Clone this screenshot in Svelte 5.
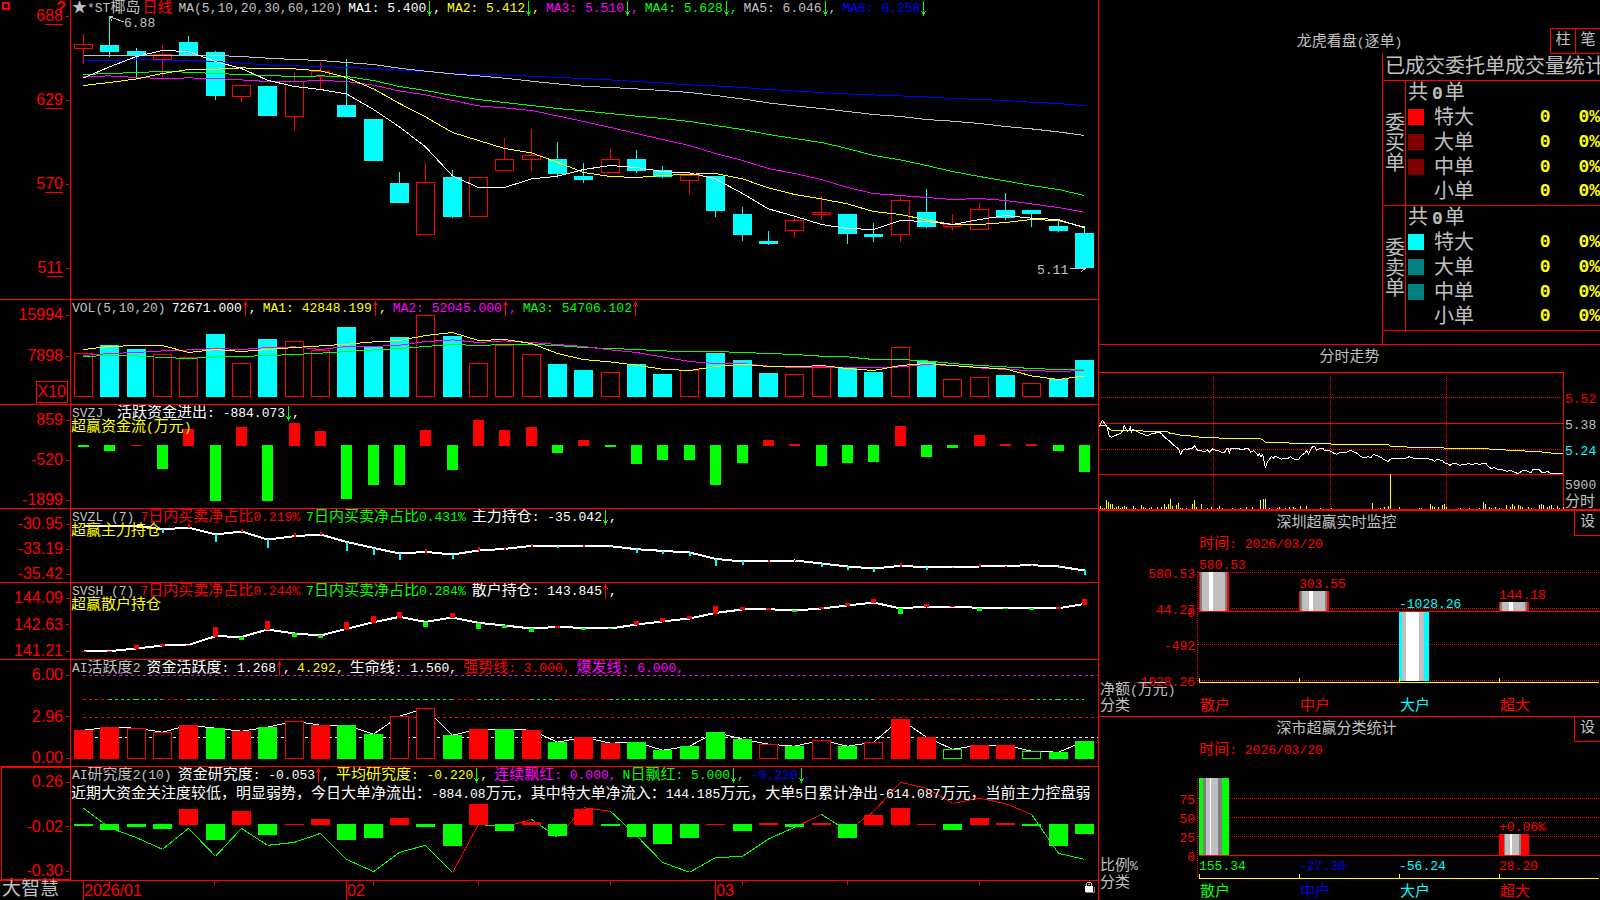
<script lang="ts">
  type Segment = { text: string; color: string; arrow?: "up" | "down"; comma?: boolean };
  type Caption = { x: number; y: number; text: string; color: string; end?: boolean };
  type Column = { x: number; top: number; bottom: number; bands: [string, number][] };

  const RED = "#ff0000";
  const GREEN = "#00ff00";
  const CYAN = "#00ffff";
  const YELLOW = "#ffff00";
  const MAGENTA = "#ff00ff";
  const BLUE = "#0000ff";
  const SILVER = "#c0c0c0";
  const GRAY = "#808080";
  const WHITE = "#ffffff";

  // centre of the n-th trading day
  const cx = (i: number) => Math.round(83 + i * 26.34);
  const indexes = Array.from({ length: 39 }, (_, i) => i);

  // line series are stored in thirds of a pixel
  function line(ys: number[], shift = 0) {
    return ys.map((y, i) => `${cx(i) + 0.5},${(y / 3 + shift + 0.2).toFixed(1)}`).join(" ");
  }

  // [body top, body bottom, high, low, rising]
  const candles: [number, number, number, number, number][] = [
    [44, 49, 34, 64, 1], [45, 52, 16, 57, 0], [51, 56, 48, 77, 0], [54, 60, 45, 77, 1],
    [42, 56, 36, 56, 0], [52, 96, 51, 100, 0], [85, 97, 85, 102, 1], [86, 116, 86, 116, 0],
    [81, 117, 72, 131, 1], [71, 77, 62, 89, 1], [105, 117, 59, 117, 0], [119, 161, 119, 161, 0],
    [183, 203, 172, 203, 0], [182, 235, 163, 235, 1], [177, 217, 170, 218, 0], [177, 217, 177, 217, 1],
    [159, 171, 138, 171, 1], [155, 160, 129, 171, 1], [159, 174, 142, 178, 0], [176, 180, 163, 183, 0],
    [159, 173, 149, 173, 1], [159, 171, 150, 173, 0], [170, 177, 166, 178, 0], [175, 181, 173, 194, 1],
    [176, 211, 176, 217, 0], [214, 235, 207, 241, 0], [241, 244, 231, 245, 0], [220, 231, 217, 238, 1],
    [212, 215, 196, 220, 1], [214, 234, 214, 244, 0], [234, 237, 223, 242, 0], [200, 235, 197, 242, 1],
    [212, 227, 189, 228, 0], [224, 227, 214, 231, 1], [209, 230, 203, 230, 1], [210, 218, 193, 220, 0],
    [210, 214, 210, 227, 0], [226, 231, 220, 232, 0], [233, 268, 226, 268, 0]
  ];

  const averages: [string, number[]][] = [
    [BLUE, [181, 181, 178, 181, 181, 184, 189, 194, 197, 199, 202, 205, 210, 214, 220, 223, 225, 228, 232, 235, 239, 244, 248, 254, 257, 262, 268, 272, 277, 281, 284, 287, 290, 295, 298, 301, 306, 310, 317]],
    [SILVER, [166, 166, 166, 166, 166, 166, 169, 174, 178, 181, 187, 193, 204, 213, 221, 227, 234, 243, 251, 258, 262, 266, 271, 277, 286, 296, 308, 317, 325, 334, 343, 349, 358, 363, 370, 379, 386, 395, 406]],
    [GREEN, [223, 220, 217, 214, 216, 220, 223, 226, 229, 227, 229, 241, 259, 271, 286, 298, 307, 316, 325, 332, 340, 348, 355, 364, 376, 388, 403, 415, 427, 445, 466, 479, 496, 514, 529, 542, 556, 568, 586]],
    [MAGENTA, [229, 227, 232, 235, 233, 235, 239, 244, 244, 241, 244, 255, 272, 284, 301, 317, 323, 331, 347, 364, 382, 400, 418, 436, 460, 481, 505, 520, 538, 562, 580, 586, 592, 598, 595, 601, 611, 622, 636]],
    [YELLOW, [256, 247, 236, 220, 208, 207, 203, 205, 206, 212, 232, 266, 310, 350, 397, 421, 445, 458, 486, 517, 529, 532, 526, 522, 520, 536, 563, 583, 596, 611, 634, 643, 659, 673, 673, 667, 658, 661, 681]],
    [WHITE, [233, 200, 169, 151, 154, 184, 205, 240, 259, 268, 281, 328, 380, 440, 527, 562, 562, 536, 528, 508, 496, 502, 514, 518, 536, 580, 626, 648, 673, 685, 688, 661, 664, 673, 658, 646, 654, 658, 683]]
  ];

  const volumeTops = [53, 45, 49, 54, 57, 34, 63, 39, 41, 50, 27, 46, 37, 15, 36, 63, 45, 54, 64, 70, 72, 64, 74, 70, 53, 60, 73, 74, 66, 68, 72, 47, 61, 79, 77, 75, 83, 79, 60];
  const volumeKinds = "rccrrcrcrrccc" + "rcrrrccrccrcccrrccrcrrcrcc";

  const volumeAverages: [string, number[]][] = [
    [GREEN, [199, 196, 197, 202, 205, 200, 199, 196, 193, 189, 184, 179, 175, 169, 163, 166, 163, 163, 166, 172, 175, 178, 182, 184, 184, 187, 190, 193, 198, 200, 208, 208, 212, 220, 226, 230, 235, 238, 239]],
    [MAGENTA, [196, 190, 187, 182, 179, 175, 178, 172, 170, 178, 169, 169, 165, 154, 149, 157, 152, 157, 163, 169, 179, 187, 200, 214, 220, 220, 228, 232, 233, 232, 233, 230, 223, 226, 233, 238, 241, 244, 241]],
    [YELLOW, [178, 169, 166, 166, 187, 178, 184, 178, 172, 167, 162, 155, 151, 136, 127, 151, 148, 160, 190, 208, 215, 225, 237, 241, 229, 222, 229, 230, 226, 235, 241, 226, 220, 226, 232, 236, 257, 268, 257]]
  ];

  const fundFlow = [-2, -6, 1, -24, 17, -56, 19, -56, 23, 15, -54, -40, -40, 16, -25, 26, 16, 19, -8, 6, -2, -19, -15, -15, -40, -18, 6, 2, -21, -18, -17, 20, -12, -3, 11, 2, 2, -6, -27];

  const mainLine = [76, 76, 76, 88, 82, 103, 94, 118, 108, 103, 125, 143, 160, 155, 163, 151, 146, 137, 137, 137, 138, 147, 152, 157, 176, 184, 182, 181, 190, 199, 205, 197, 201, 201, 199, 197, 195, 199, 211];
  const mainBars = [0, 0, 0, -4, 4, -8, 3, -9, 4, 3, -9, -7, -7, 4, -5, 4, 3, 3, -2, 2, -1, -4, -3, -4, -7, -4, 2, 1, -4, -4, -4, 4, -3, -1, 3, 1, 1, -2, -5];

  const retailLine = [453, 453, 445, 436, 434, 408, 410, 388, 400, 406, 386, 366, 350, 365, 352, 368, 376, 385, 380, 383, 385, 373, 364, 355, 338, 328, 327, 331, 325, 316, 307, 325, 319, 319, 323, 324, 324, 324, 311];
  const retailBars = [1, 1, 4, 2, 1, 10, -3, 9, -4, -3, 8, 7, 6, -5, 5, -6, -3, -4, 2, -2, -1, 4, 4, 3, 8, 3, 2, -2, 2, 3, 4, -6, 3, 1, -3, -1, -2, 2, 6];

  const activeTops = [225, 216, 219, 231, 210, 219, 228, 216, 198, 210, 210, 237, 183, 159, 240, 222, 222, 225, 261, 246, 264, 261, 285, 273, 231, 252, 267, 273, 255, 273, 261, 192, 246, 282, 270, 270, 288, 291, 258];
  // upper case is a filled bar, lower case an outlined one
  const activeKinds = "RRrrRGRGrRGGrrGRGRGRRGGGGGrGrGrRRgRRgGG";
  const activeTrend = "RGGRGRGGGGGGGGRGRGRRGGGGGGGGGGRRRRRRGG";

  const studyBars = [-2, -6, -3, -5, 16, -16, 14, -11, 1, 6, -16, -14, 7, -3, -22, 21, -7, 3, -12, 16, -2, -13, -20, -14, 1, -7, 2, -3, 2, -14, 10, 17, 1, -6, 7, 2, -2, -22, -10];
  const studyLine = [460, 518, 548, 583, 520, 604, 520, 571, 562, 535, 613, 650, 592, 571, 653, 508, 516, 493, 547, 458, 469, 542, 622, 652, 608, 604, 552, 517, 478, 528, 470, 382, 400, 445, 430, 446, 478, 595, 613];
  const studyTrend = "GGGGGGGGGGGGGGRGRGRRGGGGGGGRGRRRRRRRGG";

  const trendPrice =
    "28,258 34,246 38,241 44,250 50,258 58,288 64,292 72,288 82,284 92,280 98,272 103,256 108,266 113,274 118,268 121,262 124,276 128,268 138,272 148,278 158,282 168,286 176,286 184,282 194,280 204,276 214,280 222,290 232,298 244,308 252,316 262,324 266,328 272,343 278,330 286,326 292,330 300,324 308,324 314,318 322,330 332,332 344,336 352,330 358,336 368,326 376,330 386,332 396,338 404,336 410,326 414,324 418,338 422,326 434,324 446,326 456,330 466,326 474,324 482,336 490,332 498,338 504,346 508,342 512,350 518,344 524,374 527,382 532,366 538,358 544,350 550,354 556,348 566,354 574,358 584,354 592,356 602,350 608,356 616,358 626,358 634,346 644,340 650,332 656,342 662,328 668,320 674,320 680,330 688,326 698,324 704,332 714,330 722,334 732,340 740,343 750,338 760,337 772,336 782,331 792,336 802,340 812,350 824,354 834,350 842,354 850,344 860,346 872,352 884,360 894,364 904,356 920,356 936,356 948,354 958,350 968,354 990,355 1010,356 1024,358 1034,364 1040,358 1050,360 1058,362 1062,368 1070,370 1080,376 1090,370 1102,372 1110,377 1118,372 1128,374 1136,370 1146,374 1156,370 1168,373 1178,371 1188,371 1196,380 1204,386 1212,382 1222,388 1234,388 1244,392 1252,394 1262,390 1272,396 1284,401 1294,394 1304,390 1312,394 1318,396 1324,398 1328,388 1346,388 1354,396 1366,398 1372,394 1382,400 1396,401 1420,400";
  const trendAverage =
    "28,259 34,256 46,256 60,268 68,272 158,272 160,274 232,275 240,280 268,284 272,287 304,288 334,292 386,293 390,295 508,296 518,298 526,307 596,308 600,310 722,311 724,313 896,315 902,319 950,320 952,322 1060,323 1064,325 1178,326 1230,329 1284,332 1346,335 1382,339 1420,341";
  const trendVolume = [
    [31, 498], [37, 504], [43, 504], [49, 480], [55, 486], [61, 492], [67, 492], [73, 504], [79, 501], [85, 498],
    [91, 504], [97, 501], [103, 498], [109, 501], [130, 498], [136, 504], [154, 495], [160, 501], [166, 504],
    [178, 504], [184, 501], [202, 501], [214, 501], [223, 492], [229, 501], [235, 492], [241, 477], [247, 498],
    [259, 495], [265, 489], [271, 504], [277, 504], [289, 504], [307, 492], [313, 480], [319, 501], [334, 492],
    [352, 504], [364, 501], [382, 504], [388, 498], [397, 504], [427, 504], [451, 504], [469, 501], [487, 501],
    [511, 480], [520, 477], [526, 477], [538, 504], [562, 504], [568, 501], [586, 504], [598, 501], [610, 501],
    [616, 504], [631, 498], [649, 498], [691, 504], [724, 504], [847, 489], [871, 504], [883, 501], [895, 498],
    [901, 402], [928, 501], [988, 504], [994, 504], [1021, 492], [1027, 498], [1033, 501], [1045, 501], [1057, 495],
    [1063, 492], [1069, 501], [1111, 504], [1138, 504], [1168, 504], [1180, 486], [1186, 492], [1198, 501],
    [1204, 504], [1216, 501], [1228, 504], [1249, 495], [1261, 501], [1267, 492], [1273, 498], [1285, 495],
    [1291, 498], [1297, 501], [1315, 501], [1324, 504], [1348, 495], [1354, 492], [1360, 495], [1372, 501],
    [1378, 498], [1384, 495], [1390, 504], [1402, 498], [1408, 504], [1420, 501]
  ];
  const trendScale: Caption[] = [
    { x: 1, y: 26, text: "5.52", color: RED },
    { x: 1, y: 52, text: "5.38", color: SILVER },
    { x: 1, y: 78, text: "5.24", color: CYAN },
    { x: 1, y: 112, text: "5900", color: SILVER },
    { x: 1, y: 129, text: "分时", color: SILVER }
  ];

  const heads: Record<string, Segment[]> = {
    ma: [
      { text: "MA(5,10,20,30,60,120)", color: SILVER },
      { text: "MA1: 5.400", color: WHITE, arrow: "down", comma: true },
      { text: "MA2: 5.412", color: YELLOW, arrow: "down", comma: true },
      { text: "MA3: 5.510", color: MAGENTA, arrow: "down", comma: true },
      { text: "MA4: 5.628", color: GREEN, arrow: "down", comma: true },
      { text: "MA5: 6.046", color: SILVER, arrow: "down", comma: true },
      { text: "MA6: 6.258", color: BLUE, arrow: "down" }
    ],
    vol: [
      { text: "VOL(5,10,20)", color: SILVER },
      { text: "72671.000", color: WHITE, arrow: "up", comma: true },
      { text: "MA1: 42848.199", color: YELLOW, arrow: "up", comma: true },
      { text: "MA2: 52045.000", color: MAGENTA, arrow: "up", comma: true },
      { text: "MA3: 54706.102", color: GREEN, arrow: "up" }
    ],
    flow: [
      { text: "SVZJ ", color: SILVER },
      { text: "活跃资金进出: -884.073", color: WHITE, arrow: "down", comma: true }
    ],
    main: [
      { text: "SVZL (7)", color: SILVER },
      { text: "7日内买卖净占比0.219%", color: RED },
      { text: "7日内买卖净占比0.431%", color: GREEN },
      { text: "主力持仓: -35.042", color: WHITE, arrow: "down", comma: true }
    ],
    retail: [
      { text: "SVSH (7)", color: SILVER },
      { text: "7日内买卖净占比0.244%", color: RED },
      { text: "7日内买卖净占比0.284%", color: GREEN },
      { text: "散户持仓: 143.845", color: WHITE, arrow: "up", comma: true }
    ],
    active: [
      { text: "AI活跃度2", color: SILVER },
      { text: "资金活跃度: 1.268", color: WHITE, arrow: "up", comma: true },
      { text: "4.292,", color: YELLOW },
      { text: "生命线: 1.560,", color: WHITE },
      { text: "强势线: 3.000,", color: RED },
      { text: "爆发线: 6.000,", color: MAGENTA }
    ],
    study: [
      { text: "AI研究度2(10)", color: SILVER },
      { text: "资金研究度: -0.053", color: WHITE, arrow: "up", comma: true },
      { text: "平均研究度: -0.220", color: YELLOW, arrow: "down", comma: true },
      { text: "连续飘红: 0.000,", color: MAGENTA },
      { text: "N日飘红: 5.000", color: GREEN, arrow: "down", comma: true },
      { text: "-0.220", color: BLUE, arrow: "down", comma: true }
    ]
  };

  const advice =
    "近期大资金关注度较低，明显弱势，今日大单净流出：-884.08万元，其中特大单净流入：144.185万元，大单5日累计净出-614.087万元，当前主力控盘弱";

  const orders = [
    { side: "委买单", colors: ["#ff0000", "#800000", "#800000", ""] },
    { side: "委卖单", colors: ["#00ffff", "#008080", "#008080", ""] }
  ];
  const sizes = ["特大", "大单", "中单", "小单"];

  const redBands: [string, number][] = [[RED, 1], [GRAY, 2], [SILVER, 7], [WHITE, 4], [SILVER, 12], [GRAY, 2], [RED, 2]];

  const monitor = {
    height: 162,
    zero: 57,
    base: 128,
    axisTop: 18,
    dotted: [18, 54, 90, 126],
    columns: [
      { x: 100, top: 18, bottom: 57, bands: redBands },
      { x: 200, top: 37, bottom: 57, bands: redBands },
      { x: 300, top: 58, bottom: 127, bands: [[CYAN, 3], [SILVER, 4], [WHITE, 13], [SILVER, 5], [CYAN, 5]] },
      { x: 400, top: 48, bottom: 57, bands: redBands }
    ] as Column[],
    captions: [
      { x: 96, y: 19, text: "580.53", color: RED, end: true },
      { x: 96, y: 55, text: "44.27", color: RED, end: true },
      { x: 96, y: 58, text: "0", color: RED, end: true },
      { x: 96, y: 91, text: "-492", color: RED, end: true },
      { x: 96, y: 127, text: "-1028.26", color: RED, end: true },
      { x: 100, y: 10, text: "580.53", color: RED },
      { x: 200, y: 29, text: "303.55", color: RED },
      { x: 300, y: 49, text: "-1028.26", color: CYAN },
      { x: 400, y: 40, text: "144.18", color: RED },
      { x: 1, y: 135, text: "净额(万元)", color: SILVER },
      { x: 1, y: 151, text: "分类", color: SILVER },
      { x: 101, y: 151, text: "散户", color: RED },
      { x: 201, y: 151, text: "中户", color: RED },
      { x: 301, y: 151, text: "大户", color: CYAN },
      { x: 401, y: 151, text: "超大", color: RED }
    ] as Caption[]
  };

  const stats = {
    height: 140,
    zero: 95,
    base: 118,
    axisTop: 18,
    dotted: [38, 57, 76],
    columns: [
      { x: 100, top: 18, bottom: 95, bands: [[GREEN, 4], [GRAY, 3], [SILVER, 4], [WHITE, 1], [SILVER, 7], [GRAY, 4], [GREEN, 7]] },
      { x: 400, top: 74, bottom: 95, bands: [[RED, 5], [GRAY, 1], [SILVER, 5], [WHITE, 2], [SILVER, 7], [GRAY, 2], [RED, 8]] }
    ] as Column[],
    captions: [
      { x: 96, y: 39, text: "75", color: RED, end: true },
      { x: 96, y: 58, text: "50", color: RED, end: true },
      { x: 96, y: 77, text: "25", color: RED, end: true },
      { x: 96, y: 96, text: "0", color: RED, end: true },
      { x: 400, y: 66, text: "+0.06%", color: RED },
      { x: 1, y: 105, text: "比例%", color: SILVER },
      { x: 1, y: 122, text: "分类", color: SILVER },
      { x: 100, y: 105, text: "155.34", color: GREEN },
      { x: 200, y: 105, text: "-27.30", color: BLUE },
      { x: 300, y: 105, text: "-56.24", color: CYAN },
      { x: 400, y: 105, text: "28.20", color: RED },
      { x: 101, y: 131, text: "散户", color: GREEN },
      { x: 201, y: 131, text: "中户", color: BLUE },
      { x: 301, y: 131, text: "大户", color: CYAN },
      { x: 401, y: 131, text: "超大", color: RED }
    ] as Caption[]
  };

  // split into latin and chinese runs, which are set in different sizes
  const runs = (text: string) => text.split(/([\x20-\x7e]+)/).filter((run) => run);
  const isLatin = (run: string) => /^[\x20-\x7e]/.test(run);
  const pct = (value: number, total: number) => `${((value / total) * 100).toFixed(3)}%`;

  function bandRects(column: Column) {
    let x = column.x;
    return column.bands.map(([color, width]) => {
      const rect = { x, width, color };
      x += width;
      return rect;
    });
  }
</script>

{#snippet mixed(text: string)}{#each runs(text) as run}<span class:latin={isLatin(run)}>{run}</span>{/each}{/snippet}

{#snippet arrow(dir: string)}
  <svg class="arrow" viewBox="0 0 7 15" aria-hidden="true">
    {#if dir === "up"}
      <path d="M3 0h1v15H3zM2 2h3v2H2zM1 4h1v1H1zM5 4h1v1H5z" fill={RED} />
    {:else}
      <path d="M3 0h1v15H3zM2 11h3v2H2zM1 10h1v1H1zM5 10h1v1H5z" fill={GREEN} />
    {/if}
  </svg>
{/snippet}

{#snippet segments(list: Segment[])}
  {#each list as seg}
    <span class="segment" style:color={seg.color}>
      {@render mixed(seg.text)}{#if seg.arrow}{@render arrow(seg.arrow)}{/if}{#if seg.comma}<span class="latin">,</span>{/if}
    </span>
  {/each}
{/snippet}

{#snippet axis(labels: string[])}
  <div class="axis">
    {#each labels as label}
      <span class="tick">{label}</span>
    {/each}
  </div>
{/snippet}

{#snippet captions(list: Caption[], width: number, height: number)}
  {#each list as c}
    <text x={pct(c.x, width)} y={pct(c.y + 5, height)} fill={c.color} text-anchor={c.end ? "end" : "start"}>{#each runs(c.text) as run}<tspan class:latin={isLatin(run)}>{run}</tspan>{/each}</text>
  {/each}
{/snippet}

{#snippet gauge(chart: typeof monitor)}
  <svg class="gauge">
    <svg width="100%" height="100%" viewBox="0 0 501 {chart.height}" preserveAspectRatio="none">
      <g stroke={RED} stroke-dasharray="1 1">
        <path d="M98.5 {chart.axisTop}V{chart.base}" />
        {#each chart.dotted as y}
          <path d="M99 {y + 0.5}H501" />
        {/each}
      </g>
      <path d="M100 {chart.zero + 0.5}H501" stroke={RED} />
      {#each chart.columns as column}
        {#each bandRects(column) as band}
          <rect x={band.x} y={column.top} width={band.width} height={column.bottom - column.top} fill={band.color} />
        {/each}
      {/each}
      <path
        d="M100 {chart.base + 0.5}H500M100.5 {chart.base}v-4M200.5 {chart.base}v-4M300.5 {chart.base}v-4M400.5 {chart.base}v-4"
        stroke={YELLOW}
      />
    </svg>
    {@render captions(chart.captions, 501, chart.height)}
  </svg>
{/snippet}

<main class="terminal">
  <div class="charts">
    <section class="panel price">
      <div class="axis">
        <span class="tick">6<u>88</u></span>
        <span class="tick">6<u>29</u></span>
        <span class="tick">5<u>70</u></span>
        <span class="tick">5<u>11</u></span>
        <svg class="handle" viewBox="0 0 9 9" aria-hidden="true">
          <path d="M1 1h6v6H1zM6 6l2 2" fill="none" stroke={RED} stroke-width="2" />
        </svg>
        <span class="help">?</span>
      </div>
      <div class="plot">
        <svg class="graph" viewBox="71 0 1027 299" preserveAspectRatio="none">
          {#each candles as [top, bottom, high, low, rising], i}
            {@const color = rising ? RED : CYAN}
            <path d="M{cx(i) + 0.5} {high}V{low}" stroke={color} />
            <rect x={cx(i) - 8.5} y={top + 0.5} width="18" height={bottom - top - 1} stroke={color} fill={rising ? "#000" : CYAN} />
          {/each}
          {#each averages as [color, ys]}
            <polyline points={line(ys)} stroke={color} />
          {/each}
          <path d="M124 22L110 17M113 16l-3 1l2 4M1070 268.5H1085M1081 265l4 3.5l-4 3.5" stroke={SILVER} />
        </svg>
        <svg class="graph">
          {@render captions(
            [
              { x: 53, y: 22, text: "6.88", color: SILVER },
              { x: 966, y: 269, text: "5.11", color: SILVER }
            ],
            1027,
            299
          )}
        </svg>
        <header class="head">
          <span class="segment stock">
            <span class="star">★</span>{@render mixed("*ST椰岛")}
          </span>
          <span class="segment period">日线</span>
          {@render segments(heads.ma)}
        </header>
      </div>
    </section>

    <section class="panel volume">
      <div class="axis">
        <span class="tick">15994</span>
        <span class="tick">7898</span>
        <span class="unit">X10</span>
      </div>
      <div class="plot">
        <svg class="graph" viewBox="71 0 1027 104" preserveAspectRatio="none">
          {#each volumeTops as top, i}
            {@const rising = volumeKinds[i] === "r"}
            <rect x={cx(i) - 8.5} y={top + 0.5} width="18" height={96 - top} stroke={rising ? RED : CYAN} fill={rising ? "#000" : CYAN} />
          {/each}
          {#each volumeAverages as [color, ys]}
            <polyline points={line(ys, -10)} stroke={color} />
          {/each}
        </svg>
        <header class="head">{@render segments(heads.vol)}</header>
      </div>
    </section>

    <section class="panel">
      {@render axis(["859", "-520", "-1899"])}
      <div class="plot">
        <svg class="graph" viewBox="71 0 1027 103" preserveAspectRatio="none">
          {#each fundFlow as v, i}
            <rect x={cx(i) - 5} y={v > 0 ? 41 - v : 40} width="11" height={Math.abs(v)} fill={v > 0 ? RED : GREEN} />
          {/each}
        </svg>
        <header class="head">{@render segments(heads.flow)}</header>
        <p class="note yellow">{@render mixed("超赢资金流(万元)")}</p>
      </div>
    </section>

    <section class="panel">
      {@render axis(["-30.95", "-33.19", "-35.42"])}
      <div class="plot">
        <svg class="graph" viewBox="71 0 1027 73" preserveAspectRatio="none">
          <polyline class="thick" points={line(mainLine, -9)} stroke={WHITE} />
          {#each mainBars as v, i}
            {@const y = Math.round(mainLine[i] / 3 - 9)}
            <rect x={cx(i)} y={v > 0 ? y + 1 - v : y} width="2" height={Math.abs(v)} fill={v > 0 ? RED : CYAN} />
          {/each}
        </svg>
        <header class="head">{@render segments(heads.main)}</header>
        <p class="note yellow">超赢主力持仓</p>
      </div>
    </section>

    <section class="panel">
      {@render axis(["144.09", "142.63", "141.21"])}
      <div class="plot">
        <svg class="graph" viewBox="71 0 1027 76" preserveAspectRatio="none">
          <polyline class="thick" points={line(retailLine, -83)} stroke={WHITE} />
          {#each retailBars as v, i}
            {@const y = Math.round(retailLine[i] / 3 - 83)}
            <rect x={cx(i) - 2} y={v > 0 ? y + 1 - v : y} width="5" height={Math.abs(v)} fill={v > 0 ? RED : GREEN} />
          {/each}
        </svg>
        <header class="head">{@render segments(heads.retail)}</header>
        <p class="note yellow">超赢散户持仓</p>
      </div>
    </section>

    <section class="panel">
      {@render axis(["6.00", "2.96", "0.00"])}
      <div class="plot">
        <svg class="graph" viewBox="71 0 1027 106" preserveAspectRatio="none">
          <g stroke-dasharray="3 3">
            <path d="M83 15.5H1098" stroke={MAGENTA} />
            <path d="M83 57.5H1098" stroke={RED} />
            <path d="M83 77.5H1098" stroke={WHITE} />
            {#each activeTrend as kind, i}
              <path d="M{cx(i)} 39.5H{cx(i + 1)}" stroke={kind === "R" ? RED : GREEN} />
            {/each}
          </g>
          <polyline points={line(activeTops, -5)} stroke={WHITE} />
          {#each indexes as i}
            {@const kind = activeKinds[i]}
            {@const color = kind.toUpperCase() === "R" ? RED : GREEN}
            {@const top = activeTops[i] / 3 - 5}
            <rect x={cx(i) - 8.5} y={top + 0.5} width="18" height={98 - top} stroke={color} fill={kind === kind.toUpperCase() ? color : "#000"} />
          {/each}
        </svg>
        <header class="head">{@render segments(heads.active)}</header>
      </div>
    </section>

    <section class="panel selected">
      {@render axis(["0.26", "-0.02", "-0.30"])}
      <div class="plot">
        <svg class="graph" viewBox="71 0 1027 113" preserveAspectRatio="none">
          {#each studyTrend as kind, i}
            <path
              d="M{cx(i) + 0.5} {studyLine[i] / 3 - 112}L{cx(i + 1) + 0.5} {studyLine[i + 1] / 3 - 112}"
              stroke={kind === "R" ? RED : GREEN}
            />
          {/each}
          {#each studyBars as v, i}
            <rect x={cx(i) - 9} y={v > 0 ? 58 - v : 57} width="19" height={Math.abs(v)} fill={v > 0 ? RED : GREEN} />
          {/each}
        </svg>
        <header class="head">{@render segments(heads.study)}</header>
        <p class="note advice">{@render mixed(advice)}</p>
      </div>
    </section>

    <footer class="timeline">
      <span class="brand">大智慧</span>
      <div class="plot">
        <svg class="graph" viewBox="71 0 1027 19" preserveAspectRatio="none">
          {#each [109, 214, 373, 478, 610, 742, 847, 979] as x}
            <path d="M{x + 0.5} 0v4" stroke={RED} />
          {/each}
        </svg>
        <div class="months">
          <span></span>
          <time datetime="2026-01">2026/01</time>
          <time datetime="2026-02">02</time>
          <time datetime="2026-03">03</time>
        </div>
        <svg class="lock" viewBox="0 0 11 11" aria-hidden="true">
          <path d="M2 4V1h1V0h4v1h1v3H7V1H3v3z" fill={SILVER} />
          <path d="M2 11h9V5h-1v5H2z" fill={GRAY} />
          <path d="M1 4h8v6H1z" fill={WHITE} />
          <path d="M4 2h2v1H4z" fill={SILVER} />
        </svg>
      </div>
    </footer>
  </div>

  <aside class="side">
    <section class="box">
      <div class="box-head top-head">
        <h2>{@render mixed("龙虎看盘(逐单)")}</h2>
        <div class="modes">
          <button type="button">柱</button>
          <button type="button">笔</button>
        </div>
      </div>
      <div class="orders">
        <h3>已成交委托单成交量统计</h3>
        <table>
          {#each orders as group}
            <tbody>
              <tr>
                <th class="side-name" rowspan="5" scope="rowgroup">{group.side}</th>
                <td class="total" colspan="4">共<b>0</b>单</td>
              </tr>
              {#each sizes as size, i}
                <tr>
                  <td class="swatch-cell">
                    {#if group.colors[i]}<span class="swatch" style:background={group.colors[i]}></span>{/if}
                  </td>
                  <th scope="row">{size}</th>
                  <td class="number">0</td>
                  <td class="number">0%</td>
                </tr>
              {/each}
            </tbody>
          {/each}
        </table>
      </div>
    </section>

    <section class="box trend">
      <h2>分时走势</h2>
      <div class="trend-body">
        <svg class="graph trend-graph" viewBox="27 96 1395 411" preserveAspectRatio="none">
          <path d="M27 97.5H1420.5V507M27 250.5H1420M27 403.5H1420" stroke={RED} />
          <path d="M27 172.5H1420M27 328.5H1420M370.5 97V507M721.5 97V507M1069.5 97V507" stroke={RED} stroke-dasharray="1 1" />
          {#each trendVolume as [x, top]}
            <path d="M{x + 0.5} {top}V507" stroke={YELLOW} />
          {/each}
          <polyline points={trendAverage} stroke={YELLOW} />
          <polyline points={trendPrice} stroke={WHITE} />
        </svg>
        <svg class="scale">{@render captions(trendScale, 36, 137)}</svg>
      </div>
    </section>

    <section class="box">
      <div class="box-head">
        <h2>深圳超赢实时监控</h2>
        <button type="button">设</button>
      </div>
      <p class="date">{@render mixed("时间: 2026/03/20")}</p>
      {@render gauge(monitor)}
    </section>

    <section class="box last">
      <div class="box-head">
        <h2>深市超赢分类统计</h2>
        <button type="button">设</button>
      </div>
      <p class="date">{@render mixed("时间: 2026/03/20")}</p>
      {@render gauge(stats)}
    </section>
  </aside>
</main>

<style>
  :global(body) {
    margin: 0;
    background: #000;
  }

  .terminal,
  .terminal * {
    box-sizing: border-box;
  }

  .terminal {
    --red: #ff0000;
    --silver: #c0c0c0;
    display: grid;
    grid-template-columns: minmax(0, 1099fr) minmax(0, 501fr);
    grid-template-rows: minmax(0, 1fr);
    height: 100vh;
    min-height: 640px;
    overflow: hidden;
    background: #000;
    color: var(--silver);
    font-family: "Liberation Mono", "Noto Sans CJK SC", monospace;
    font-size: 15px;
    font-weight: 400;
    line-height: 16px;
    white-space: nowrap;
  }

  h2,
  h3,
  p {
    margin: 0;
    font-size: 15px;
    font-weight: 400;
  }

  button {
    padding: 0;
    border: 0 solid var(--red);
    background: #000;
    color: var(--silver);
    font: inherit;
    cursor: pointer;
  }

  .latin {
    font-size: 13px;
  }

  /* left column */

  .charts {
    display: grid;
    grid-template-rows: 300fr 105fr 104fr 74fr 77fr 107fr 114fr 19fr;
    min-height: 0;
    border-right: 1px solid var(--red);
  }

  .panel,
  .timeline {
    display: grid;
    grid-template-columns: 71px minmax(0, 1fr);
    grid-template-rows: minmax(0, 1fr);
    min-height: 0;
  }

  .panel {
    border-bottom: 1px solid var(--red);
  }

  .axis {
    position: relative;
    display: flex;
    flex-direction: column;
    align-items: flex-end;
    justify-content: space-between;
    padding-top: 7px;
    border-right: 1px solid var(--red);
    color: var(--red);
    font-family: "Liberation Sans", sans-serif;
    font-size: 16px;
    font-weight: 400;
  }

  .price .axis {
    padding: 8px 0 23px;
  }

  .volume .axis {
    padding-bottom: 40px;
  }

  .selected .axis {
    border: 1px solid var(--red);
    margin-left: 1px;
    padding-top: 6px;
  }

  .tick {
    display: flex;
    align-items: center;
    height: 16px;
  }

  .tick::after {
    content: "";
    width: 3px;
    height: 1px;
    margin: 0 1px 0 3px;
    background: var(--red);
  }

  .tick u {
    text-underline-offset: 3px;
    text-decoration-thickness: 1px;
  }

  .handle {
    position: absolute;
    top: 2px;
    left: 2px;
    width: 9px;
    height: 9px;
  }

  .help {
    position: absolute;
    top: 0;
    right: 4px;
    font-weight: 700;
  }

  .unit {
    position: absolute;
    right: 2px;
    bottom: 1px;
    padding: 2px 1px;
    border: 1px solid var(--red);
  }

  .plot {
    display: grid;
    grid-template-columns: minmax(0, 1fr);
    grid-template-rows: auto auto minmax(0, 1fr);
    min-height: 0;
    overflow: hidden;
  }

  .graph {
    grid-area: 1 / 1 / -1 / -1;
    display: block;
    width: 100%;
    height: 100%;
    min-height: 0;
    contain: size;
    fill: none;
    shape-rendering: crispEdges;
  }

  .graph :is(path, polyline, rect) {
    vector-effect: non-scaling-stroke;
  }

  .graph .thick {
    stroke-width: 2px;
  }

  .head {
    grid-area: 1 / 1;
    display: flex;
    gap: 6px;
    height: 16px;
    padding: 1px 0 0 1px;
    z-index: 1;
  }

  .segment {
    display: flex;
    align-items: baseline;
    white-space: pre;
  }

  .arrow {
    align-self: center;
    width: 7px;
    height: 15px;
    shape-rendering: crispEdges;
  }

  .star {
    width: 15px;
    overflow: hidden;
  }

  .period {
    margin-left: -4px;
    color: var(--red);
  }

  .note {
    grid-area: 2 / 1;
    line-height: 14px;
    z-index: 1;
  }

  .yellow {
    color: #ffff00;
  }

  .advice {
    padding-top: 4px;
    color: #fff;
    line-height: 16px;
  }

  .brand {
    padding-left: 2px;
    font-size: 19px;
    line-height: 18px;
  }

  .months {
    grid-area: 1 / 1 / -1 / -1;
    display: grid;
    grid-template-columns: 12fr 263fr 369fr 383fr;
    color: var(--red);
    font-family: "Liberation Sans", sans-serif;
    font-size: 16px;
    font-weight: 400;
    line-height: 19px;
  }

  .months time {
    border-left: 1px solid var(--red);
  }

  .lock {
    grid-area: 1 / 1 / -1 / -1;
    justify-self: end;
    width: 11px;
    height: 11px;
    margin: 1px 3px 0 0;
    shape-rendering: crispEdges;
  }

  /* right column */

  .side {
    display: grid;
    grid-template-rows: 345fr 166fr 206fr 183fr;
    min-height: 0;
  }

  .box {
    display: flex;
    flex-direction: column;
    min-height: 0;
    overflow: hidden;
    border-bottom: 1px solid var(--red);
  }

  .last {
    border-bottom: 0;
  }

  .box-head {
    display: flex;
    align-items: center;
    height: 25px;
  }

  .box-head h2 {
    flex: 1;
    text-align: center;
  }

  .box-head > button {
    width: 26px;
    height: 25px;
    border-width: 0 0 1px 1px;
  }

  .top-head {
    height: 26px;
    margin-top: 28px;
  }

  .top-head h2 {
    padding: 3px 0 0 50px;
  }

  .modes {
    display: flex;
  }

  .modes button {
    width: 25px;
    height: 26px;
    border-width: 1px 0 1px 1px;
  }

  .orders {
    flex: 1;
    align-self: flex-end;
    width: 218px;
    padding-left: 1px;
    border-left: 1px solid var(--red);
  }

  .orders h3 {
    height: 27px;
    padding-left: 1px;
    border-bottom: 1px solid var(--red);
    font-size: 20px;
    line-height: 28px;
  }

  table {
    width: 100%;
    border-spacing: 0;
    font-size: 20px;
    line-height: 20px;
  }

  th,
  td {
    height: 25px;
    padding: 0;
    font-weight: 400;
    text-align: left;
  }

  .side-name,
  tbody tr:last-child :is(th, td) {
    border-bottom: 1px solid var(--red);
  }

  .side-name {
    width: 22px;
    padding: 4px 0 0 1px;
    border-right: 1px solid var(--red);
    white-space: normal;
    word-break: break-all;
  }

  .total {
    padding-left: 2px;
  }

  .total b {
    padding: 0 2px 0 4px;
    font-size: 18px;
    font-weight: 700;
  }

  .swatch-cell {
    width: 28px;
    padding: 0 0 4px 2px;
  }

  .swatch {
    display: block;
    width: 16px;
    height: 16px;
  }

  .number {
    padding-bottom: 4px;
    color: #ffff00;
    font-size: 18px;
    font-weight: 700;
    text-align: right;
  }

  .trend {
    border-bottom-width: 2px;
  }

  .trend h2 {
    padding: 5px 0 6px;
    text-align: center;
  }

  .trend-body {
    flex: 1;
    display: grid;
    grid-template-columns: minmax(0, 1fr) 36px;
    grid-template-rows: minmax(0, 1fr);
    min-height: 0;
  }

  .trend-graph {
    grid-area: 1 / 1;
  }

  .scale {
    display: block;
    width: 100%;
    height: 100%;
    min-height: 0;
    contain: size;
  }

  .gauge {
    display: block;
    flex: 1 1 0;
    width: 100%;
    min-height: 0;
    shape-rendering: crispEdges;
  }

  .date {
    padding-left: 20%;
    color: var(--red);
    line-height: 18px;
    white-space: pre;
  }
</style>
